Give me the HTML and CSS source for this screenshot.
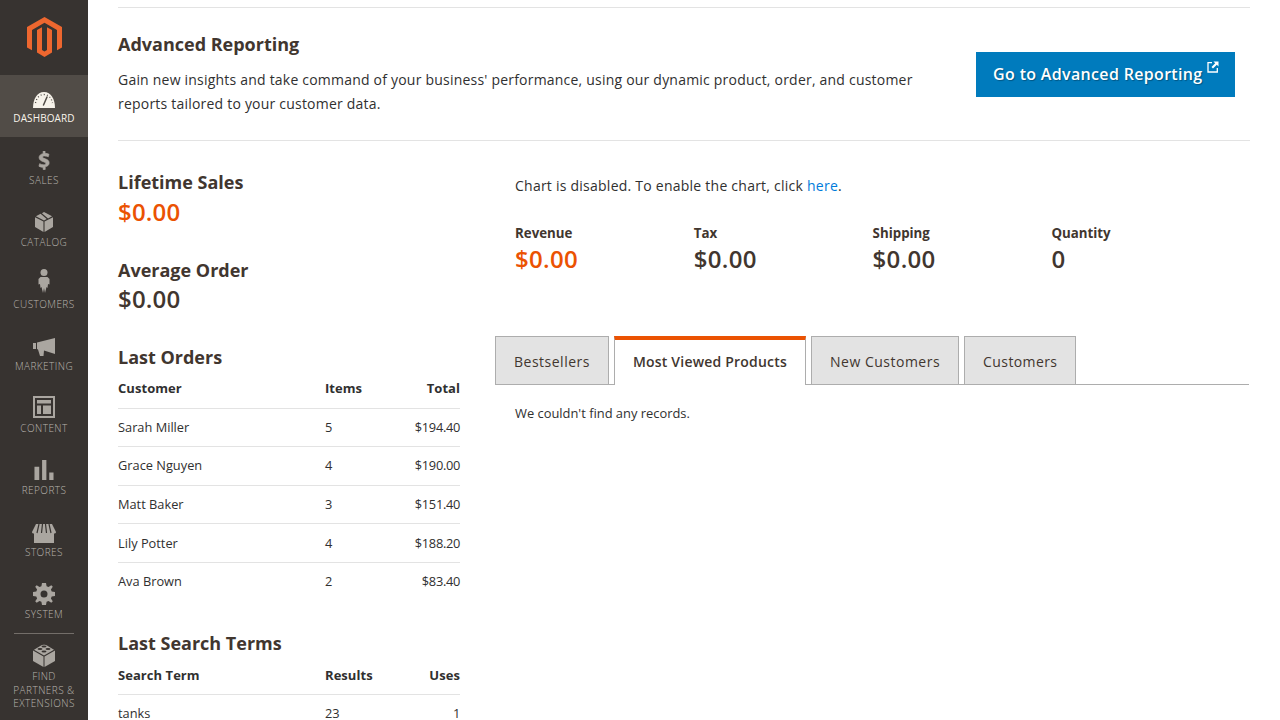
FILE: index.html
```html
<!DOCTYPE html>
<html>
  <head>
    <title>Dashboard</title>
    <link rel="stylesheet" href="styles.css">
  </head>
  <body>
    <nav class="sidebar">
      <div class="logo">
        <svg width="35" height="40" viewBox="0 0 35 40">
          <path fill="#ee672f" d="M17.500 0 35 10V30.500L30 33.200V13L17.500 5.800 5 13V33.200L0 30.500V10Z"/>
          <path fill="#ee672f" d="M15 10.200V33L17.500 34.400 20 33V10.200L25 13V35.600L17.500 40 10 35.600V13Z"/>
        </svg>
      </div>
      <a class="navItem active">
        <svg width="22" height="16" viewBox="0 0 22 16"><path fill="#f7f3eb" d="M0 16C0 7 4 0 11 0s11 7 11 16Z"/><path stroke="#514c47" stroke-width="1.500" stroke-linecap="round" d="M10.500 13 14 5"/><path stroke="#514c47" stroke-width="1.300" stroke-dasharray="1 2.200" fill="none" d="M2.500 11C3.500 6 6.500 2.500 11 2.500s7.500 3.500 8.500 8.500"/></svg>
        <span>Dashboard</span>
      </a>
      <a class="navItem">
        <svg width="12" height="19" viewBox="0 0 14 22"><path fill="#aaa6a0" stroke="#aaa6a0" stroke-width=".8" d="M6 0h2.200v2.600c1.800.1 3.400.5 4.600 1.100l-.8 3c-1.300-.6-2.900-1-4.300-1-1.500 0-2.300.5-2.300 1.300 0 .8.900 1.300 3 2 3 1 4.600 2.400 4.600 4.800 0 2.300-1.600 4-4.600 4.500V21.500H6v-2.500c-1.900-.1-3.800-.6-4.900-1.300l.8-3c1.300.7 3 1.300 4.700 1.300 1.500 0 2.500-.6 2.500-1.500 0-.9-.8-1.400-2.800-2.100C3.300 11.400 1.300 10 1.300 7.600c0-2.300 1.600-4 4.700-4.600Z"/></svg>
        <span>Sales</span>
      </a>
      <a class="navItem">
        <svg width="18" height="20" viewBox="0 0 20 22"><path fill="#aaa6a0" d="M9.400 10.500 0 5.600v11L9.400 22ZM10.600 10.500V22L20 16.600v-11ZM6.200 1.900 1 4.700 10 9.400l3-1.600ZM10 0 7.700 1.200 14.500 7 19 4.700Z"/></svg>
        <span>Catalog</span>
      </a>
      <a class="navItem raised">
        <svg width="12" height="24" viewBox="0 0 12 24"><circle fill="#aaa6a0" cx="6" cy="3.500" r="3.500"/><path fill="#aaa6a0" d="M2.500 8h7L11.500 10V15.500L10 15 9.500 19 8.500 18 7 24 6 19 5 24 3.500 18 2.500 19 2 15 .5 15.500V10Z"/></svg>
        <span>Customers</span>
      </a>
      <a class="navItem">
        <svg width="22" height="18" viewBox="0 0 22 18"><path fill="#aaa6a0" d="M0 5h3v6H0ZM4 4.500 22 0v16L11 12.500 10.500 18H7L5 11.500 4 11Z"/></svg>
        <span>Marketing</span>
      </a>
      <a class="navItem">
        <svg width="22" height="22" viewBox="0 0 22 22"><path fill="#aaa6a0" fill-rule="evenodd" d="M0 0h22v22H0ZM2 2V20H20V2ZM4 4H18V7.500H4ZM4 9.500H8V18H4ZM10 9.500H18V18H10Z"/></svg>
        <span>Content</span>
      </a>
      <a class="navItem">
        <svg width="20" height="20" viewBox="0 0 20 21"><path fill="#aaa6a0" d="M0 7h5v14H0ZM8 0h4.500v21H8ZM15.500 13H20v8h-4.500Z"/></svg>
        <span>Reports</span>
      </a>
      <a class="navItem tight">
        <svg width="24" height="19" viewBox="0 0 24 19"><path fill="#aaa6a0" d="M2 9.500h20V19H2ZM4 0h16l4 8c0 1-1 1.500-2 1.500H2C1 9.500 0 9 0 8Z"/><path stroke="#373330" stroke-width="1.200" d="M7 0 5 9M10.500 0 9.500 9M13.500 0 14.500 9M17 0 19 9"/></svg>
        <span>Stores</span>
      </a>
      <a class="navItem tight">
        <svg width="22" height="22" viewBox="0 0 22 22"><path fill="#aaa6a0" fill-rule="evenodd" d="M9 0h4l.6 3.300 1.900.8L18.300 2.200 19.800 3.700 17.900 6.500 18.700 8.400 22 9v4l-3.300.6-.8 1.900 1.900 2.800-1.500 1.500-2.800-1.900-1.900.8L13 22H9l-.6-3.300-1.900-.8-2.800 1.900-1.500-1.500 1.900-2.800-.8-1.900L0 13V9l3.300-.6.8-1.900L2.200 3.700 3.700 2.200 6.500 4.100 8.400 3.300ZM11 7.500a3.500 3.500 0 1 0 0 7 3.500 3.500 0 0 0 0-7Z"/></svg>
        <span>System</span>
      </a>
      <a class="navItem tight partners">
        <svg width="22" height="23" viewBox="0 0 22 23"><path fill="#aaa6a0" d="M0 6.500 10.500 12.500V23L0 17ZM22 6.500 11.500 12.500V23L22 17ZM8 1.500C9 .5 13 .5 14 1.500L21 5.800 11 11.500 1 5.800Z"/><ellipse fill="#373330" cx="7" cy="5" rx="2.500" ry="1"/><ellipse fill="#373330" cx="15" cy="5" rx="2.500" ry="1"/><ellipse fill="#373330" cx="11" cy="2.500" rx="2.500" ry="1"/><ellipse fill="#373330" cx="11" cy="7.500" rx="2.500" ry="1"/></svg>
        <span>Find Partners &amp; Extensions</span>
      </a>
    </nav>

    <main class="content">
      <section class="advanced">
        <div class="advancedText">
          <h2>Advanced Reporting</h2>
          <p>Gain new insights and take command of your business' performance, using our dynamic product, order, and customer reports tailored to your customer data.</p>
        </div>
        <a class="advancedBtn">Go to Advanced Reporting
          <svg width="12" height="12" viewBox="0 0 12 12"><path fill="none" stroke="#fff" stroke-width="1.300" d="M5 1.700H1V11H10.300V7"/><path fill="#fff" d="M6.500 .5H11.500V5.500L9.800 3.800 6 7.500 4.500 6 8.200 2.200Z"/></svg>
        </a>
      </section>

      <div class="columns">
        <aside class="leftCol">
          <div class="stat">
            <h3>Lifetime Sales</h3>
            <div class="bigPrice orange">$0.00</div>
          </div>
          <div class="stat">
            <h3>Average Order</h3>
            <div class="bigPrice">$0.00</div>
          </div>

          <h3 class="tableTitle">Last Orders</h3>
          <table class="grid">
            <tr><th>Customer</th><th class="items">Items</th><th class="total">Total</th></tr>
            <tr><td>Sarah Miller</td><td>5</td><td class="total">$194.40</td></tr>
            <tr><td>Grace Nguyen</td><td>4</td><td class="total">$190.00</td></tr>
            <tr><td>Matt Baker</td><td>3</td><td class="total">$151.40</td></tr>
            <tr><td>Lily Potter</td><td>4</td><td class="total">$188.20</td></tr>
            <tr><td>Ava Brown</td><td>2</td><td class="total">$83.40</td></tr>
          </table>

          <h3 class="tableTitle searchTitle">Last Search Terms</h3>
          <table class="grid searchGrid">
            <tr><th>Search Term</th><th class="items">Results</th><th class="total">Uses</th></tr>
            <tr><td>tanks</td><td>23</td><td class="total">1</td></tr>
          </table>
        </aside>

        <div class="rightCol">
          <p class="chartNote">Chart is disabled. To enable the chart, click <a href="#">here</a>.</p>
          <div class="totals">
            <div class="totalItem"><label>Revenue</label><div class="midPrice orange">$0.00</div></div>
            <div class="totalItem"><label>Tax</label><div class="midPrice">$0.00</div></div>
            <div class="totalItem"><label>Shipping</label><div class="midPrice">$0.00</div></div>
            <div class="totalItem"><label>Quantity</label><div class="midPrice">0</div></div>
          </div>
          <ul class="tabs">
            <li>Bestsellers</li>
            <li class="current">Most Viewed Products</li>
            <li>New Customers</li>
            <li>Customers</li>
          </ul>
          <p class="noRecords">We couldn't find any records.</p>
        </div>
      </div>
    </main>
  </body>
</html>
```

FILE: styles.css
```css
* {
  box-sizing: border-box;
}

html,
body {
  height: 720px;
  overflow: hidden;
}

body {
  margin: 0;
  display: flex;
  font-family: "Open Sans", sans-serif;
  color: #303030;
  background-color: #fff;
}

.sidebar {
  width: 88px;
  height: 720px;
  flex-shrink: 0;
  background-color: #373330;
}

.logo {
  height: 75px;
  padding: 17px 0 0 1px;
  text-align: center;
}

.navItem {
  display: flex;
  flex-direction: column;
  align-items: center;
  justify-content: flex-end;
  height: 62px;
  padding-bottom: 12px;
  color: #b8b4ae;
  font-size: 10px;
  font-weight: 300;
  line-height: 13px;
  letter-spacing: 0.45px;
  text-align: center;
  text-transform: uppercase;
}

.navItem svg {
  margin-bottom: 4px;
}

.navItem.raised svg {
  margin-bottom: 5px;
}

.navItem.tight svg {
  margin-bottom: 3px;
}

.navItem.active {
  background-color: #514c47;
  color: #f7f3eb;
  font-weight: 400;
  letter-spacing: 0.1px;
}

.navItem.partners {
  position: relative;
  height: 87px;
  padding: 11px 0 0;
  justify-content: flex-start;
}

.navItem.partners::before {
  content: "";
  position: absolute;
  top: 0;
  left: 14px;
  width: 60px;
  border-top: 1px solid #736e69;
}

.navItem.partners span {
  width: 70px;
  line-height: 13.500px;
}

.content {
  flex: 1;
  min-width: 0;
  padding: 7px 30px 0;
}

.advanced {
  display: flex;
  justify-content: space-between;
  align-items: flex-start;
  height: 134px;
  border-top: 1px solid #e3e3e3;
  border-bottom: 1px solid #e3e3e3;
}

.advancedText {
  width: 810px;
  padding-top: 24px;
}

.advancedText h2 {
  margin: 0 0 12px;
  font-size: 18px;
  line-height: 24px;
  font-weight: 700;
  color: #41362f;
}

.advancedText p {
  margin: 0;
  font-size: 14px;
  line-height: 24px;
  letter-spacing: 0.21px;
  color: #303030;
}

.advancedBtn {
  display: block;
  height: 45px;
  margin: 44px 15px 0 0;
  padding: 0 16px 0 17px;
  background-color: #007bbd;
  color: #fff;
  font-size: 16px;
  line-height: 44px;
  font-weight: 600;
  letter-spacing: 0.33px;
  white-space: nowrap;
  text-shadow: 1px 1px 1px rgba(0, 0, 0, 0.3);
}

.advancedBtn svg {
  vertical-align: 7px;
}

.columns {
  display: flex;
}

.leftCol {
  width: 342px;
  flex-shrink: 0;
  padding-top: 29px;
}

.leftCol h3 {
  margin: 0;
  font-size: 18px;
  line-height: 24px;
  font-weight: 700;
  color: #41362f;
}

.stat {
  height: 88px;
}

.stat + .stat {
  height: 87px;
}

.stat + .stat .bigPrice {
  margin-top: -1px;
}

.bigPrice {
  font-size: 24px;
  line-height: 36px;
  font-weight: 600;
  letter-spacing: 0.2px;
  color: #41362f;
}

.orange {
  color: #eb5202 !important;
}

.grid {
  width: 100%;
  border-collapse: collapse;
  font-size: 12.800px;
  color: #303030;
}

.searchGrid {
  margin-top: 1px;
}

.grid th {
  height: 39px;
  padding: 0;
  text-align: left;
  font-weight: 700;
  font-size: 13px;
  letter-spacing: 0.05px;
  vertical-align: middle;
  border-bottom: 1px solid #e3e3e3;
}

.grid td {
  height: 38.600px;
  padding: 0 0 1px;
  border-bottom: 1px solid #e3e3e3;
}

.grid tr:last-child td {
  border-bottom: none;
}

.searchGrid td {
  padding-bottom: 3px;
}

.grid .items {
  width: 72px;
}

.grid .total {
  width: 63px;
  text-align: right;
}

.grid td.total {
  letter-spacing: -0.3px;
}

.leftCol .searchTitle {
  margin-top: 30px;
}

.rightCol {
  flex: 1;
  min-width: 0;
  padding: 33px 1px 0 35px;
}

.chartNote {
  margin: 0 0 0 20px;
  font-size: 14px;
  line-height: 24px;
  letter-spacing: 0.24px;
  color: #303030;
}

.chartNote a {
  color: #007bdb;
  text-decoration: none;
}

.totals {
  display: flex;
  height: 74px;
  margin: 25px 0 0 20px;
}

.totalItem {
  width: 178.800px;
}

.totalItem label {
  display: block;
  font-size: 13.300px;
  line-height: 20px;
  font-weight: 700;
  color: #41362f;
}

.midPrice {
  font-size: 24px;
  line-height: 32px;
  font-weight: 600;
  letter-spacing: 0.3px;
  color: #41362f;
}

.tabs {
  display: flex;
  gap: 5px;
  height: 49px;
  margin: 39px 0 0;
  padding: 0;
  list-style: none;
  border-bottom: 1px solid #adadad;
}

.tabs li {
  height: 49px;
  padding: 0 18px;
  border: 1px solid #adadad;
  background-color: #e3e3e3;
  color: #41362f;
  font-size: 14px;
  line-height: 50px;
  letter-spacing: 0.5px;
}

.tabs li:last-child {
  letter-spacing: 0.4px;
}

.tabs li.current {
  border-top: 4px solid #eb5202;
  border-bottom: none;
  background-color: #fff;
  font-weight: 600;
  line-height: 44px;
  letter-spacing: 0.2px;
}

.noRecords {
  margin: 18px 0 0 20px;
  font-size: 12.900px;
  line-height: 20px;
  color: #303030;
}
```
